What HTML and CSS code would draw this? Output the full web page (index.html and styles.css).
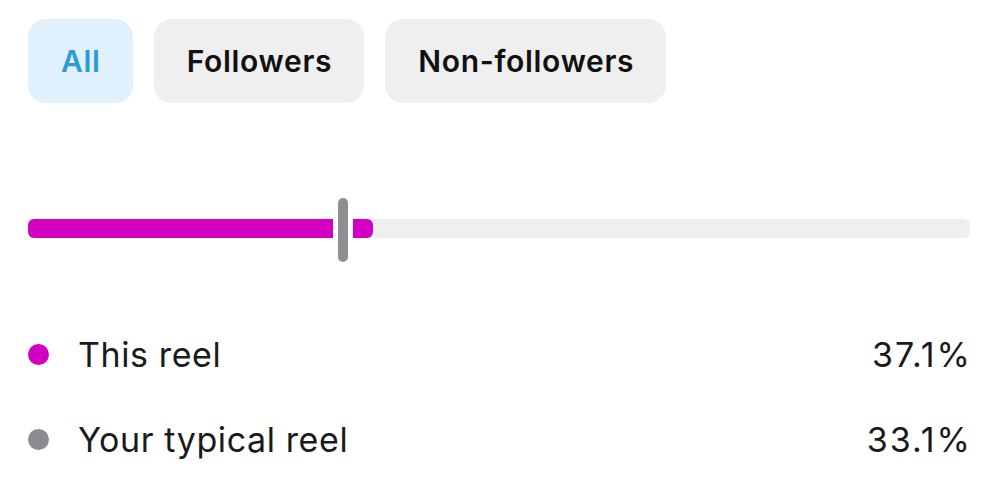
FILE: index.html
```html
<!DOCTYPE html>
<html lang="en">

<head>
    <meta charset="UTF-8">
    <meta name="viewport" content="width=device-width, initial-scale=1.0">
    <title>Reel audience</title>
    <link rel="stylesheet" href="styles.css">
</head>

<body>
    <div class="page">
        <!-- Filtros de audiência -->
        <div class="filters">
            <button class="chip chip-active">All</button>
            <button class="chip">Followers</button>
            <button class="chip">Non-followers</button>
        </div>

        <!-- Barra de comparação -->
        <div class="meter">
            <div class="meter-fill" style="width: 36.6%;"></div>
            <div class="meter-mark" style="left: 310px;"></div>
        </div>

        <!-- Legenda -->
        <div class="legend">
            <div class="legend-row">
                <div class="legend-label">
                    <span class="dot dot-reel"></span>
                    <span>This reel</span>
                </div>
                <span class="legend-value">37.1%</span>
            </div>
            <div class="legend-row">
                <div class="legend-label">
                    <span class="dot dot-typical"></span>
                    <span>Your typical reel</span>
                </div>
                <span class="legend-value">33.1%</span>
            </div>
        </div>
    </div>
</body>

</html>
```

FILE: styles.css
```css
/* Estilos gerais */
body {
    margin: 0;
    background-color: #ffffff;
    font-family: Inter, "Liberation Sans", Arial, sans-serif;
    color: #1a1a1a;
}

.page {
    padding: 19px 30px 0 28px;
}

/* Filtros */
.filters {
    display: flex;
    gap: 21px;
}

.chip {
    height: 84px;
    padding: 0 32px 0 33px;
    border: none;
    border-radius: 18px;
    background-color: #efefef;
    color: #111111;
    font-family: Inter, "Liberation Sans", Arial, sans-serif;
    font-size: 30px;
    font-weight: 600;
    letter-spacing: 0.7px;
    cursor: pointer;
}

.chip-active {
    background-color: #e1f0fd;
    color: #2b9cd6;
}

/* Barra */
.meter {
    position: relative;
    margin-top: 116px;
    height: 19px;
    border-radius: 6px;
    background-color: #efefef;
}

.meter-fill {
    height: 100%;
    border-radius: 6px;
    background-color: #d300c4;
}

.meter-mark {
    position: absolute;
    top: -21px;
    width: 10px;
    height: 64px;
    border-radius: 5px;
    background-color: #8e8f93;
    box-shadow: 0 0 0 5px #ffffff;
}

/* Legenda */
.legend {
    margin-top: 74px;
}

.legend-row {
    display: flex;
    justify-content: space-between;
    align-items: center;
    height: 85px;
    font-size: 34px;
    letter-spacing: 0.6px;
}

.legend-label {
    display: flex;
    align-items: center;
    gap: 29px;
}

.dot {
    width: 21px;
    height: 21px;
    border-radius: 50%;
}

.dot-reel {
    background-color: #d300c4;
}

.dot-typical {
    background-color: #8a8c90;
}

.legend-value {
    letter-spacing: 2px;
    margin-right: -2px;
}
```
